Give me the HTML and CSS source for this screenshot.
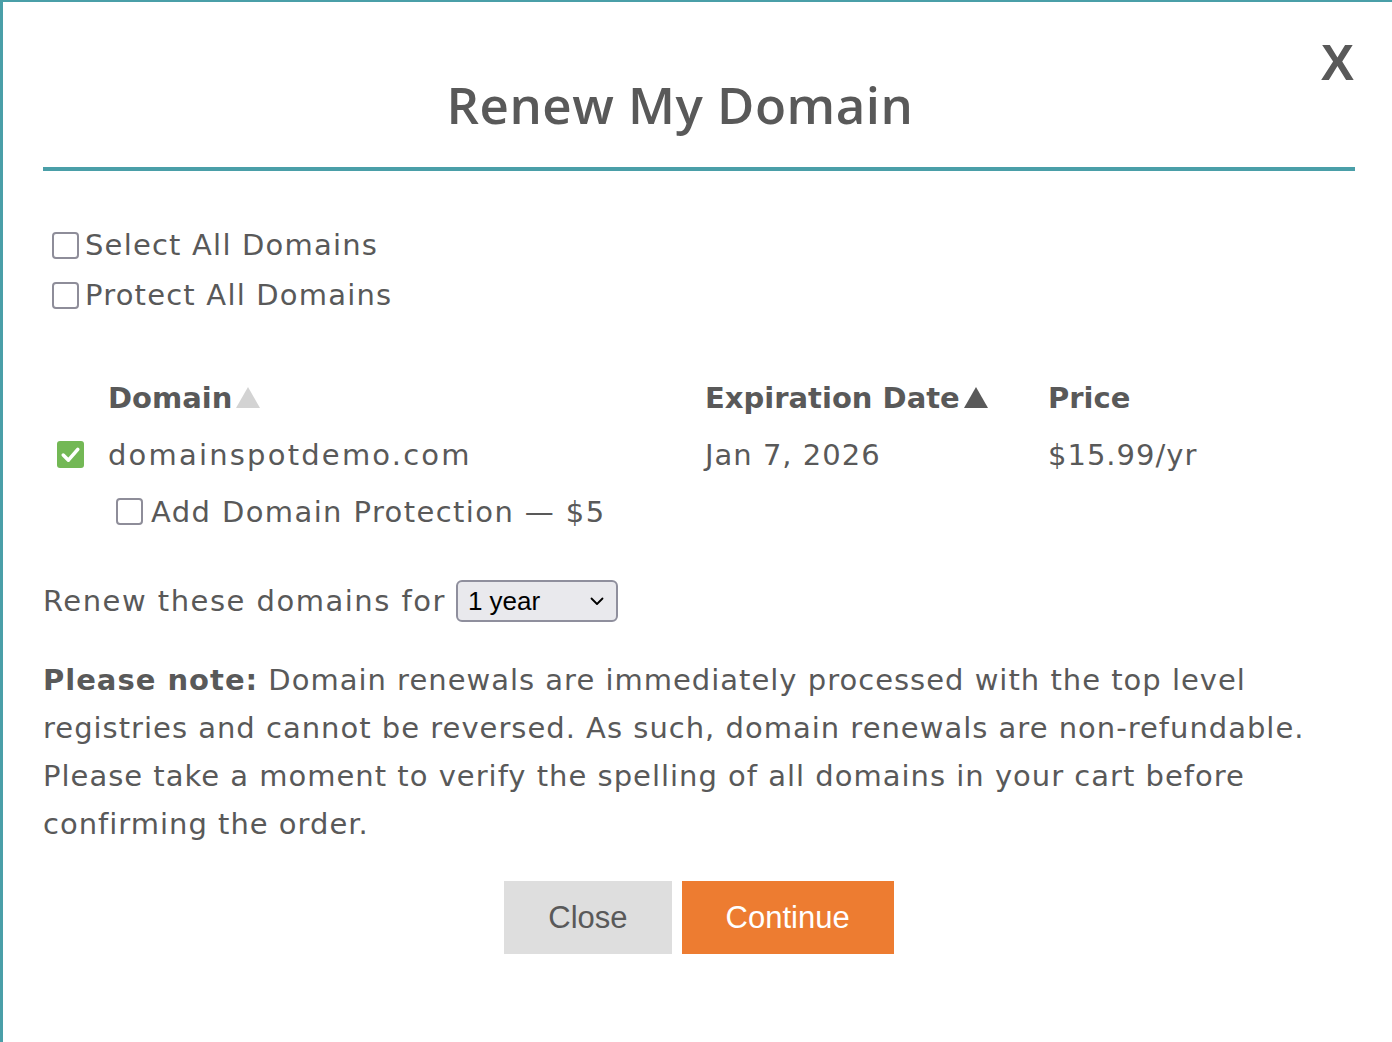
FILE: index.html
```html
<!DOCTYPE html>
<html>
<head>
    <meta charset="UTF-8">
    <meta name="viewport" content="width=device-width, initial-scale=1.0">
    <title>Renew My Domain</title>
    <link rel="stylesheet" href="styles.css">
</head>
<body>
    <div class="modal">
        <div class="modal-header">
            <h1>Renew My Domain</h1>
            <button type="button" class="btn-x">X</button>
        </div>

        <div class="bulk-options">
            <label class="check-line"><input type="checkbox"> Select All Domains</label>
            <label class="check-line"><input type="checkbox"> Protect All Domains</label>
        </div>

        <div class="domain-table">
            <div></div>
            <div class="th">Domain<svg class="sort sort-off" viewBox="0 0 24 21"><polygon points="12,0 24,21 0,21"/></svg></div>
            <div class="th">Expiration Date<svg class="sort" viewBox="0 0 24 21"><polygon points="12,0 24,21 0,21"/></svg></div>
            <div class="th">Price</div>

            <div class="td">
                <span class="box-checked">
                    <svg viewBox="0 0 26 26"><polyline points="6,13.5 11,18.5 20,8" fill="none" stroke="#fff" stroke-width="3.4" stroke-linecap="round" stroke-linejoin="round"/></svg>
                </span>
            </div>
            <div class="td td-domain">domainspotdemo.com</div>
            <div class="td">Jan 7, 2026</div>
            <div class="td">$15.99/yr</div>

            <div></div>
            <div class="td protect-cell">
                <label class="check-line"><input type="checkbox"> Add Domain Protection — $5</label>
            </div>
        </div>

        <div class="renew-line">
            Renew these domains for
            <span class="select-wrap">
                <select class="year-select">
                    <option>1 year</option>
                    <option>2 years</option>
                    <option>3 years</option>
                    <option>5 years</option>
                </select>
                <svg class="chevron" viewBox="0 0 14 9"><polyline points="1.5,1.5 7,7 12.5,1.5" fill="none" stroke="#000" stroke-width="1.8" stroke-linecap="round" stroke-linejoin="round"/></svg>
            </span>
        </div>

        <p class="note"><strong>Please note:</strong> Domain renewals are immediately processed with the top level registries and cannot be reversed. As such, domain renewals are non-refundable. Please take a moment to verify the spelling of all domains in your cart before confirming the order.</p>

        <div class="actions">
            <button type="button" class="btn btn-close">Close</button>
            <button type="button" class="btn btn-continue">Continue</button>
        </div>
    </div>
</body>
</html>
```

FILE: styles.css
```css
body {
    margin: 0;
    font-family: "DejaVu Sans", "Open Sans", Arial, sans-serif;
    color: #595959;
    background-color: #fff;
}
.modal {
    min-height: 1040px;
    border-top: 2px solid #4a9fa8;
    border-left: 3px solid #4a9fa8;
    padding: 0 37px 0 40px;
}
.modal-header {
    position: relative;
    padding-top: 72px;
    border-bottom: 4px solid #4a9fa8;
    padding-bottom: 33px;
}
h1 {
    margin: 0;
    padding-right: 38px;
    text-align: center;
    font-family: "Open Sans", Arial, sans-serif;
    font-size: 51px;
    line-height: 60px;
    font-weight: 600;
    letter-spacing: 0.5px;
    color: #595959;
}
.btn-x {
    position: absolute;
    top: 36px;
    right: 1px;
    border: none;
    background: none;
    padding: 0;
    font-family: "Liberation Sans", Arial, sans-serif;
    font-weight: bold;
    font-size: 50px;
    line-height: 50px;
    color: #595959;
    cursor: pointer;
}
.bulk-options {
    padding-top: 56px;
    display: flex;
    flex-direction: column;
    gap: 14px;
}
.check-line {
    display: flex;
    align-items: center;
    gap: 6px;
    font-size: 29px;
    line-height: 36px;
    letter-spacing: 1.2px;
}
.bulk-options .check-line {
    padding-left: 9px;
}
input[type="checkbox"] {
    appearance: none;
    -webkit-appearance: none;
    margin: 0;
    width: 27px;
    height: 27px;
    border: 2px solid #8e8d99;
    border-radius: 4px;
    background: #fff;
    flex: none;
}
.domain-table {
    margin-top: 56px;
    display: grid;
    grid-template-columns: 65px 597px 343px 1fr;
    grid-auto-rows: 57px;
    align-items: center;
}
.th {
    font-weight: bold;
    font-size: 29px;
    display: flex;
    align-items: center;
    gap: 4px;
}
.td {
    font-size: 29px;
    letter-spacing: 1px;
}
.td-domain {
    letter-spacing: 2.2px;
}
.sort {
    width: 24px;
    height: 21px;
    fill: #595959;
}
.sort-off {
    fill: #d3d3d3;
}
.box-checked {
    display: block;
    width: 27px;
    height: 27px;
    margin-left: 14px;
    border-radius: 3px;
    background-color: #73b855;
}
.box-checked svg {
    display: block;
    width: 27px;
    height: 27px;
}
.protect-cell {
    grid-column: 2 / span 2;
    padding-left: 8px;
}
.protect-cell .check-line {
    gap: 8px;
    letter-spacing: 1.4px;
}
.renew-line {
    margin-top: 40px;
    display: flex;
    align-items: center;
    gap: 10px;
    font-size: 29px;
    letter-spacing: 1.5px;
}
.select-wrap {
    position: relative;
    display: block;
    height: 42px;
}
.year-select {
    appearance: none;
    -webkit-appearance: none;
    display: block;
    width: 162px;
    height: 42px;
    font-family: "Liberation Sans", Arial, sans-serif;
    font-size: 26px;
    letter-spacing: 0;
    color: #000;
    background-color: #e9e9ed;
    border: 2px solid #8f8f9d;
    border-radius: 6px;
    padding: 0 10px;
}
.chevron {
    position: absolute;
    top: 17px;
    right: 14px;
    width: 14px;
    height: 9px;
    pointer-events: none;
}
.note {
    margin: 34px 0 0 0;
    font-size: 29px;
    line-height: 48px;
    letter-spacing: 1px;
}
.note strong {
    font-weight: bold;
}
.actions {
    margin-top: 33px;
    display: flex;
    justify-content: center;
    gap: 10px;
}
.btn {
    height: 73px;
    padding: 0 44px;
    border: none;
    border-radius: 0;
    font-family: "Liberation Sans", Arial, sans-serif;
    font-size: 31px;
    cursor: pointer;
}
.btn-close {
    background-color: #dedede;
    color: #595959;
}
.btn-continue {
    background-color: #ed7c31;
    color: #fff;
}
```
